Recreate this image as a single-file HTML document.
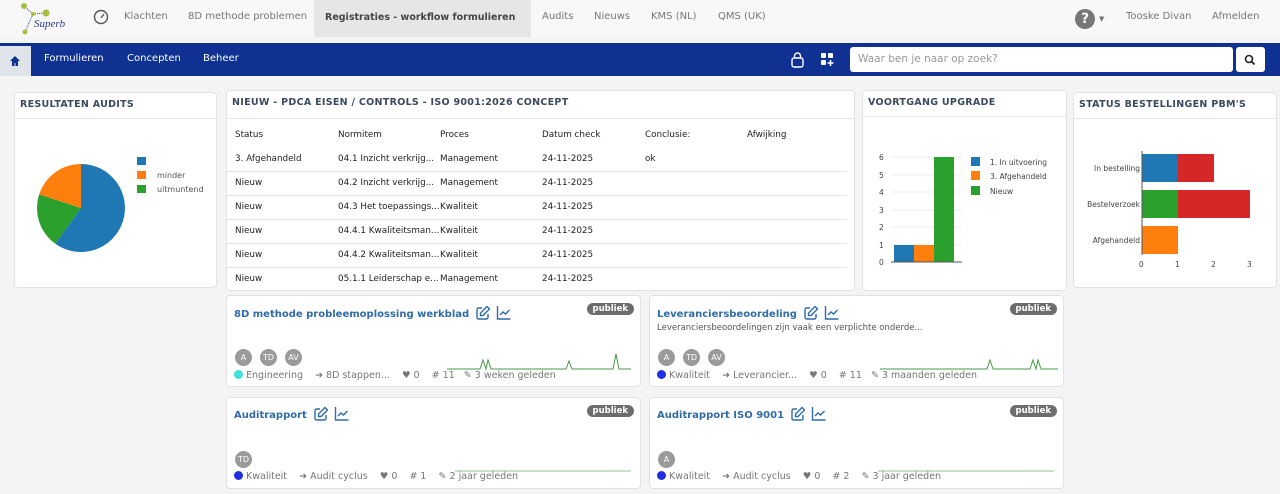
<!DOCTYPE html>
<html><head><meta charset="utf-8"><style>
*{box-sizing:border-box;margin:0;padding:0}
body{width:1280px;height:494px;background:#f4f4f4;font-family:"DejaVu Sans","Liberation Sans",sans-serif;font-size:10px;color:#333;position:relative;overflow:hidden}
.a{position:absolute}
.top{left:0;top:0;width:1280px;height:37px;background:#f8f8f8}
.top span{position:absolute;top:11px;color:#777;font-size:10px;white-space:nowrap}
.bar{left:0;top:43px;width:1280px;height:33px;background:#0e3192}
.bar span{position:absolute;top:10px;color:#fff;font-size:10px}
.card{position:absolute;background:#fff;border:1px solid #e2e2e2;border-radius:4px}
.ct{height:26px;border-bottom:1px solid #e6e6e6;padding:6px 5px;font-weight:bold;font-size:9.5px;color:#3b4a5e;letter-spacing:.3px;white-space:nowrap}
table{border-collapse:collapse;font-size:8.8px;color:#222;table-layout:fixed}
td{height:24px;padding:0 0 0 8px;border-bottom:1px solid #e4e4e4;white-space:nowrap;overflow:visible}
.lk{color:#2f6ca8;font-weight:bold;font-size:10px;white-space:nowrap}
.lk svg{vertical-align:-3px;margin-left:6px}
.pb{position:absolute;right:6px;top:7px;background:#6d6d6d;color:#fff;font-size:8.5px;font-weight:bold;border-radius:8px;padding:1px 6px}
.av{position:absolute;width:17px;height:17px;border-radius:50%;background:#9a9a9a;color:#fff;font-size:8px;text-align:center;line-height:17px}
.meta{position:absolute;font-size:9.5px;color:#777;white-space:nowrap}
.dot{display:inline-block;width:9px;height:9px;border-radius:50%;vertical-align:-1px;margin-right:3px}
</style></head><body>
<svg width="0" height="0" style="position:absolute"><defs>
<g id="ed"><path d="M7 3H3.5A1.5 1.5 0 0 0 2 4.5v8A1.5 1.5 0 0 0 3.5 14h8a1.5 1.5 0 0 0 1.5-1.5V9" fill="none" stroke="#2f6ca8" stroke-width="1.4"/><path d="M12 1.5l2.5 2.5L8 10.5H5.5V8z" fill="none" stroke="#2f6ca8" stroke-width="1.4"/></g>
<g id="ch"><path d="M1.5 1v13h13" fill="none" stroke="#2f6ca8" stroke-width="1.4"/><path d="M4 10l3-3 2.5 2L13.5 5" fill="none" stroke="#2f6ca8" stroke-width="1.4"/></g>
</defs></svg>
<div class="a top">
 <svg class="a" style="left:18px;top:2px" width="55" height="34"><line x1="6" y1="4" x2="15" y2="12" stroke="#3a4aa0" stroke-dasharray="1,1"/><line x1="15" y1="12" x2="28" y2="11" stroke="#3a4aa0" stroke-dasharray="1,1"/><line x1="15" y1="12" x2="7" y2="30" stroke="#3a4aa0" stroke-dasharray="1,1"/><circle cx="6" cy="4" r="3" fill="#a4bf3c"/><circle cx="28" cy="11" r="3.5" fill="#a4bf3c"/><circle cx="15" cy="12" r="2" fill="#a4bf3c"/><circle cx="7" cy="30" r="2.5" fill="#a4bf3c"/><text x="16" y="25" font-family="Liberation Serif" font-style="italic" font-size="11" fill="#2a3a90">Superb</text></svg>
 <svg class="a" style="left:93px;top:9px" width="16" height="16"><circle cx="8" cy="8" r="6.5" fill="none" stroke="#555" stroke-width="1.4"/><line x1="8" y1="9" x2="11" y2="5" stroke="#555" stroke-width="1.4"/></svg>
 <span style="left:124px">Klachten</span>
 <span style="left:188px">8D methode problemen</span>
 <div class="a" style="left:314px;top:0;width:217px;height:37px;background:#e6e6e6"></div>
 <span style="left:325px;color:#444;font-weight:bold;font-size:9.5px;top:12px">Registraties - workflow formulieren</span>
 <span style="left:542px">Audits</span>
 <span style="left:594px">Nieuws</span>
 <span style="left:651px">KMS (NL)</span>
 <span style="left:718px">QMS (UK)</span>
 <div class="a" style="left:1075px;top:9px;width:20px;height:20px;border-radius:50%;background:#777;color:#fff;font-weight:bold;font-size:14px;text-align:center;line-height:20px">?</div>
 <span style="left:1099px;font-size:7px;top:15px">▼</span>
 <span style="left:1126px">Tooske Divan</span>
 <span style="left:1212px">Afmelden</span>
</div>
<div class="a bar">
 <div class="a" style="left:0;top:3px;width:31px;height:30px;background:#dfe3ea"></div>
 <svg class="a" style="left:9px;top:12px" width="12" height="12"><path d="M6 1L1 6h2v5h2.5V8h1v3H9V6h2z" fill="#0e3192"/></svg>
 <span style="left:44px">Formulieren</span>
 <span style="left:127px">Concepten</span>
 <span style="left:203px">Beheer</span>
 <svg class="a" style="left:790px;top:8px" width="16" height="18"><rect x="2" y="7" width="11" height="9" rx="2" fill="none" stroke="#fff" stroke-width="1.4"/><path d="M4.5 7V5a3 3 0 0 1 6 0v2" fill="none" stroke="#fff" stroke-width="1.4"/></svg>
 <svg class="a" style="left:820px;top:9px" width="16" height="16"><rect x="1" y="1" width="5" height="5" rx="1" fill="#fff"/><rect x="8" y="1" width="5" height="5" rx="1" fill="#fff"/><rect x="1" y="8" width="5" height="5" rx="1" fill="#fff"/><path d="M10.5 8v6M7.5 11h6" stroke="#fff" stroke-width="1.6"/></svg>
 <div class="a" style="left:850px;top:4px;width:383px;height:25px;background:#fff;border-radius:3px;color:#999;padding:6px 8px;font-size:10.5px">Waar ben je naar op zoek?</div>
 <div class="a" style="left:1236px;top:4px;width:29px;height:25px;background:#fff;border-radius:3px"></div>
 <svg class="a" style="left:1244px;top:11px" width="12" height="12"><circle cx="5" cy="5" r="3.5" fill="none" stroke="#222" stroke-width="1.6"/><line x1="7.5" y1="7.5" x2="10.5" y2="10.5" stroke="#222" stroke-width="1.8"/></svg>
</div>

<div class="card" style="left:14px;top:92px;width:203px;height:196px">
 <div class="ct">RESULTATEN AUDITS</div>
 <svg class="a" style="left:0;top:26px" width="200" height="160">
  <path d="M66 89 L66 45 A44 44 0 1 1 40.1 124.6Z" fill="#1f77b4"/>
  <path d="M66 89 L40.1 124.6 A44 44 0 0 1 24.2 75.4Z" fill="#2ca02c"/>
  <path d="M66 89 L24.2 75.4 A44 44 0 0 1 66 45Z" fill="#ff7f0e"/>
  <rect x="122" y="38" width="9" height="8" fill="#1f77b4"/><rect x="122" y="52" width="9" height="8" fill="#ff7f0e"/><rect x="122" y="66" width="9" height="8" fill="#2ca02c"/>
  <text x="142" y="59" font-size="8" fill="#555">minder</text><text x="142" y="73" font-size="8" fill="#555">uitmuntend</text>
 </svg>
</div>

<div class="card" style="left:226px;top:90px;width:629px;height:201px">
 <div class="ct" style="height:28px">NIEUW - PDCA EISEN / CONTROLS - ISO 9001:2026 CONCEPT</div>
 <table class="a" style="left:0;top:32px;width:620px">
  <colgroup><col style="width:103px"><col style="width:102px"><col style="width:102px"><col style="width:103px"><col style="width:102px"><col></colgroup>
  <tr><td style="border:0">Status</td><td style="border:0">Normitem</td><td style="border:0">Proces</td><td style="border:0">Datum check</td><td style="border:0">Conclusie:</td><td style="border:0">Afwijking</td></tr>
  <tr><td>3. Afgehandeld</td><td>04.1 Inzicht verkrijg...</td><td>Management</td><td>24-11-2025</td><td>ok</td><td></td></tr>
  <tr><td>Nieuw</td><td>04.2 Inzicht verkrijg...</td><td>Management</td><td>24-11-2025</td><td></td><td></td></tr>
  <tr><td>Nieuw</td><td>04.3 Het toepassings...</td><td>Kwaliteit</td><td>24-11-2025</td><td></td><td></td></tr>
  <tr><td>Nieuw</td><td>04.4.1 Kwaliteitsman...</td><td>Kwaliteit</td><td>24-11-2025</td><td></td><td></td></tr>
  <tr><td>Nieuw</td><td>04.4.2 Kwaliteitsman...</td><td>Kwaliteit</td><td>24-11-2025</td><td></td><td></td></tr>
  <tr><td style="border:0">Nieuw</td><td style="border:0">05.1.1 Leiderschap e...</td><td style="border:0">Management</td><td style="border:0">24-11-2025</td><td style="border:0"></td><td style="border:0"></td></tr>
 </table>
</div>

<div class="card" style="left:862px;top:90px;width:205px;height:201px">
 <div class="ct">VOORTGANG UPGRADE</div>
 <svg class="a" style="left:0;top:26px" width="205" height="170" font-size="7.5" fill="#444">
  <g stroke="#eee"><line x1="28" y1="40" x2="99" y2="40"/><line x1="28" y1="58" x2="99" y2="58"/><line x1="28" y1="75" x2="99" y2="75"/><line x1="28" y1="93" x2="99" y2="93"/><line x1="28" y1="110" x2="99" y2="110"/><line x1="28" y1="128" x2="99" y2="128"/></g>
  <text x="16" y="43">6</text><text x="16" y="61">5</text><text x="16" y="78">4</text><text x="16" y="96">3</text><text x="16" y="113">2</text><text x="16" y="131">1</text><text x="16" y="148">0</text>
  <rect x="31" y="128" width="20" height="17" fill="#1f77b4"/><rect x="51" y="128" width="20" height="17" fill="#ff7f0e"/><rect x="71" y="40" width="20" height="105" fill="#2ca02c"/>
  <line x1="28" y1="145" x2="99" y2="145" stroke="#555"/>
  <rect x="108" y="40" width="9" height="9" fill="#1f77b4"/><rect x="108" y="54" width="9" height="9" fill="#ff7f0e"/><rect x="108" y="69" width="9" height="9" fill="#2ca02c"/>
  <text x="127" y="48">1. In uitvoering</text><text x="127" y="62">3. Afgehandeld</text><text x="127" y="77">Nieuw</text>
 </svg>
</div>

<div class="card" style="left:1073px;top:92px;width:204px;height:196px">
 <div class="ct">STATUS BESTELLINGEN PBM'S</div>
 <svg class="a" style="left:0;top:26px" width="204" height="165" font-size="7.5" fill="#444">
  <rect x="68" y="35" width="36" height="28" fill="#1f77b4"/><rect x="104" y="35" width="36" height="28" fill="#d62728"/>
  <rect x="68" y="71" width="36" height="28" fill="#2ca02c"/><rect x="104" y="71" width="72" height="28" fill="#d62728"/>
  <rect x="68" y="107" width="36" height="28" fill="#ff7f0e"/>
  <line x1="68" y1="32" x2="68" y2="136" stroke="#555"/>
  <text x="66" y="52" text-anchor="end">In bestelling</text><text x="66" y="88" text-anchor="end">Bestelverzoek</text><text x="66" y="124" text-anchor="end">Afgehandeld</text>
  <text x="65" y="148">0</text><text x="101" y="148">1</text><text x="137" y="148">2</text><text x="173" y="148">3</text>
 </svg>
</div>

<div class="card" style="left:226px;top:295px;width:415px;height:92px">
 <div class="a lk" style="left:7px;top:9px">8D methode probleemoplossing werkblad<svg width="15" height="15"><use href="#ed"/></svg><svg width="15" height="15"><use href="#ch"/></svg></div>
 <div class="pb">publiek</div>
 <div class="av" style="left:8px;top:53px">A</div><div class="av" style="left:33px;top:53px">TD</div><div class="av" style="left:58px;top:53px">AV</div>
 <svg class="a" style="left:220px;top:48px" width="185" height="30"><path d="M0 25H33l3-9 3 9 2-9 3 9H119l3-8 3 8H166l3-15 3 15H184" fill="none" stroke="#4a9a4a"/></svg>
 <div class="meta" style="left:7px;top:74px"><span class="dot" style="background:#3ee0e0"></span>Engineering &nbsp;&nbsp; ➜ 8D stappen... &nbsp;&nbsp; ♥ 0 &nbsp;&nbsp; # 11 &nbsp; ✎ 3 weken geleden</div>
</div>
<div class="card" style="left:649px;top:295px;width:415px;height:92px">
 <div class="a lk" style="left:7px;top:9px">Leveranciersbeoordeling<svg width="15" height="15"><use href="#ed"/></svg><svg width="15" height="15"><use href="#ch"/></svg></div>
 <div class="pb">publiek</div>
 <div class="a" style="left:7px;top:27px;font-size:8.5px;color:#555">Leveranciersbeoordelingen zijn vaak een verplichte onderde...</div>
 <div class="av" style="left:8px;top:53px">A</div><div class="av" style="left:33px;top:53px">TD</div><div class="av" style="left:58px;top:53px">AV</div>
 <svg class="a" style="left:230px;top:48px" width="180" height="30"><path d="M0 25H107l3-9 3 9H150l3-9 3 9 2-9 3 9H178" fill="none" stroke="#4a9a4a"/></svg>
 <div class="meta" style="left:7px;top:74px"><span class="dot" style="background:#2030e0"></span>Kwaliteit &nbsp;&nbsp; ➜ Leverancier... &nbsp;&nbsp; ♥ 0 &nbsp;&nbsp; # 11 &nbsp; ✎ 3 maanden geleden</div>
</div>
<div class="card" style="left:226px;top:397px;width:415px;height:92px">
 <div class="a lk" style="left:7px;top:8px">Auditrapport<svg width="15" height="15"><use href="#ed"/></svg><svg width="15" height="15"><use href="#ch"/></svg></div>
 <div class="pb">publiek</div>
 <div class="av" style="left:8px;top:53px">TD</div>
 <svg class="a" style="left:228px;top:70px" width="180" height="6"><path d="M0 3H176" stroke="#8bc48b"/></svg>
 <div class="meta" style="left:7px;top:73px"><span class="dot" style="background:#2030e0"></span>Kwaliteit &nbsp;&nbsp; ➜ Audit cyclus &nbsp;&nbsp; ♥ 0 &nbsp;&nbsp; # 1 &nbsp;&nbsp; ✎ 2 jaar geleden</div>
</div>
<div class="card" style="left:649px;top:397px;width:415px;height:92px">
 <div class="a lk" style="left:7px;top:8px">Auditrapport ISO 9001<svg width="15" height="15"><use href="#ed"/></svg><svg width="15" height="15"><use href="#ch"/></svg></div>
 <div class="pb">publiek</div>
 <div class="av" style="left:8px;top:53px">A</div>
 <svg class="a" style="left:228px;top:70px" width="180" height="6"><path d="M0 3H176" stroke="#8bc48b"/></svg>
 <div class="meta" style="left:7px;top:73px"><span class="dot" style="background:#2030e0"></span>Kwaliteit &nbsp;&nbsp; ➜ Audit cyclus &nbsp;&nbsp; ♥ 0 &nbsp;&nbsp; # 2 &nbsp;&nbsp; ✎ 3 jaar geleden</div>
</div>
</body></html>
